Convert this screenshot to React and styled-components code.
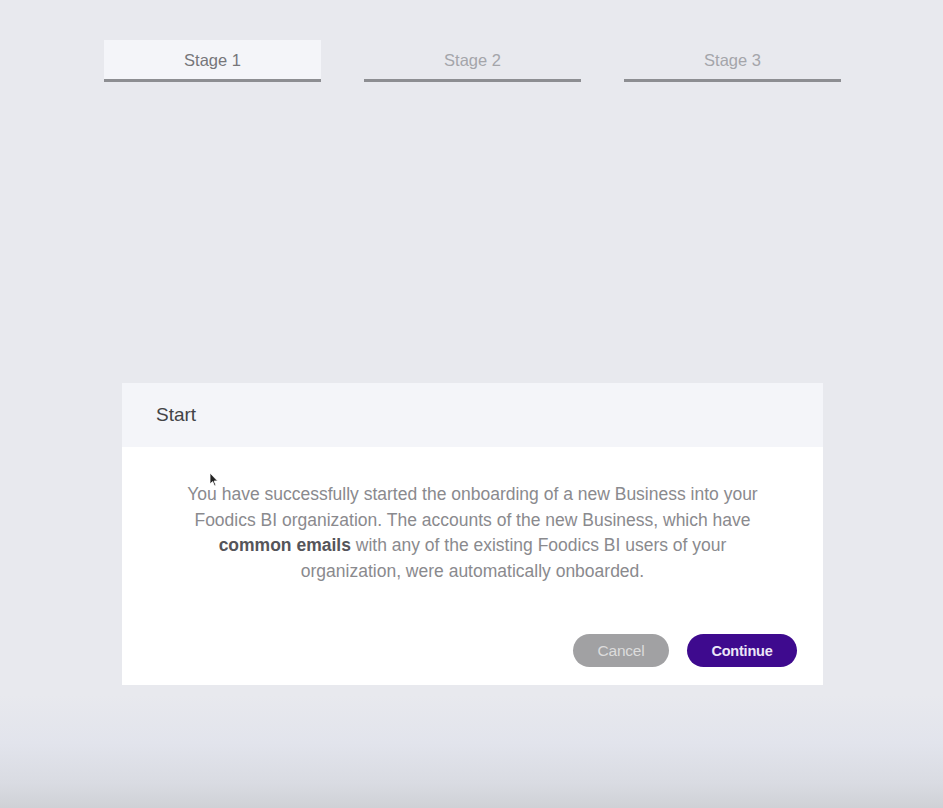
import styled, { createGlobalStyle } from "styled-components";

const GlobalStyle = createGlobalStyle`
  html, body {
    margin: 0;
    padding: 0;
  }
  body {
    font-family: "Liberation Sans", Arial, sans-serif;
    background: #e8e9ee;
  }
`;

const Page = styled.div`
  position: relative;
  width: 943px;
  height: 808px;
  overflow: hidden;
  background: linear-gradient(
    180deg,
    #e8e9ee 0%,
    #e8e9ee 86%,
    #e2e4ec 92%,
    #d9dbe2 97%,
    #cfd1d6 100%
  );
  display: flex;
  flex-direction: column;
  align-items: center;
`;

const Stages = styled.div`
  display: flex;
  gap: 43px;
  margin-top: 40px;
  margin-left: 2px;
`;

const Stage = styled.div`
  width: 217px;
  height: 38px;
  display: flex;
  align-items: center;
  justify-content: center;
  font-size: 16.5px;
  color: ${(p) => (p.active ? "#76767a" : "#a4a5aa")};
  background: ${(p) => (p.active ? "#f4f5f9" : "transparent")};
  border-bottom: 3px solid #8d8e92;
  padding-top: 1px;
`;

const Modal = styled.div`
  margin-top: 301px;
  margin-left: 2px;
  width: 701px;
  background: #ffffff;
`;

const Header = styled.div`
  height: 64px;
  background: #f4f5f9;
  display: flex;
  align-items: center;
  padding-left: 34px;
  font-size: 19px;
  color: #434346;
`;

const Body = styled.div`
  position: relative;
  padding: 35px 20px 0;
  text-align: center;
`;

const Message = styled.p`
  margin: 0;
  font-size: 17.5px;
  line-height: 25.6px;
  color: #8a8a8e;
  white-space: nowrap;
`;

const Strong = styled.strong`
  font-weight: 700;
  color: #55555a;
`;

const Actions = styled.div`
  display: flex;
  justify-content: flex-end;
  gap: 18px;
  padding: 50px 26px 18px;
`;

const Button = styled.button`
  height: 33px;
  width: ${(p) => p.w}px;
  border: none;
  border-radius: 17px;
  font-family: inherit;
  font-size: ${(p) => (p.primary ? 14.5 : 15.5)}px;
  font-weight: ${(p) => (p.primary ? 700 : 400)};
  color: ${(p) => (p.primary ? "#ece6f7" : "#dcdcdc")};
  background: ${(p) => (p.primary ? "#3e0a8e" : "#a1a1a3")};
  letter-spacing: -0.2px;
  cursor: pointer;
`;

const Cursor = styled.svg`
  position: absolute;
  left: 87px;
  top: 25px;
`;

export default function App() {
  return (
    <>
      <GlobalStyle />
      <Page>
        <Stages>
          <Stage active>Stage 1</Stage>
          <Stage>Stage 2</Stage>
          <Stage>Stage 3</Stage>
        </Stages>
        <Modal>
          <Header>Start</Header>
          <Body>
            <Cursor width="10" height="15" viewBox="0 0 10 15">
              <path d="M1 1 L1 12 L3.6 9.6 L5.6 14 L7 13.4 L5.1 9 L8.6 9 Z" fill="#222" stroke="#fff" strokeWidth="0.8" />
            </Cursor>
            <Message>
              You have successfully started the onboarding of a new Business into your
              <br />
              Foodics BI organization. The accounts of the new Business, which have
              <br />
              <Strong>common emails</Strong> with any of the existing Foodics BI users of your
              <br />
              organization, were automatically onboarded.
            </Message>
          </Body>
          <Actions>
            <Button w={96}>Cancel</Button>
            <Button w={110} primary>
              Continue
            </Button>
          </Actions>
        </Modal>
      </Page>
    </>
  );
}
